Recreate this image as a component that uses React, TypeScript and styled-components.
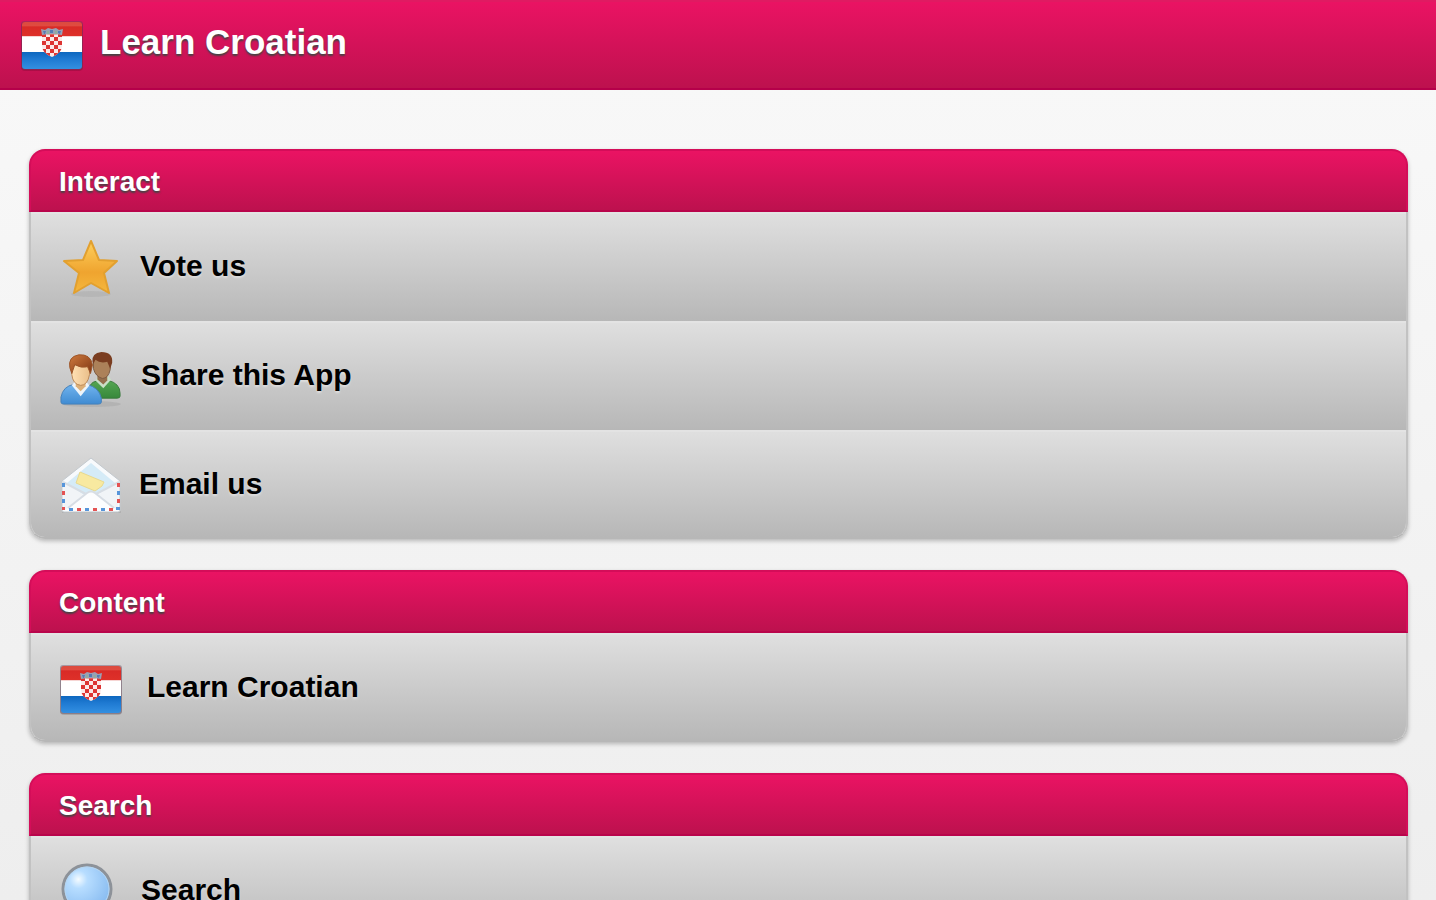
import React from "react";
import styled, { createGlobalStyle } from "styled-components";

const GlobalStyle = createGlobalStyle`
  *, *::before, *::after { box-sizing: border-box; }
  html {
    min-height: 100%;
    background: linear-gradient(#f9f9f9, #eeeeee) fixed;
    scrollbar-width: none;
  }
  body {
    margin: 0;
    font-family: "Liberation Sans", Arial, Helvetica, sans-serif;
  }
`;

const Page = styled.div`
  min-height: 100vh;
`;

const TopBar = styled.header`
  display: flex;
  align-items: center;
  gap: 16px;
  height: 90px;
  padding: 0 20px;
  color: #fff;
  background: linear-gradient(#ea1363, #bd114e);
  border-top: 2px solid #e01a62;
  border-bottom: 2px solid #b5004a;
`;

const Title = styled.h1`
  margin: 0;
  padding-bottom: 6px;
  font-size: 35px;
  line-height: 40px;
  font-weight: 700;
  text-shadow: 0 2px 2px #444;
`;

const Sections = styled.main`
  display: flex;
  flex-direction: column;
  gap: 31px;
  padding: 59px 28px 30px 29px;
`;

const Card = styled.section`
  border-radius: 16px;
  box-shadow: 0 2px 4px rgba(0, 0, 0, 0.25);
`;

const CardTitle = styled.h2`
  margin: 0;
  height: 63px;
  padding: 0 28px;
  font-size: 28px;
  line-height: 62px;
  font-weight: 700;
  color: #fff;
  text-shadow: 0 2px 2px #444;
  background: linear-gradient(#ea1363, #bd114e);
  border: 2px solid #d40d59;
  border-bottom-color: #b9044b;
  border-radius: 16px 16px 0 0;
`;

const List = styled.ul`
  margin: 0;
  padding: 0;
  list-style: none;
  border: solid #c2c2c2;
  border-width: 0 2px 2px;
  border-bottom-color: #b7b7b7;
  border-radius: 0 0 16px 16px;
  overflow: hidden;
`;

const Item = styled.li`
  height: 109px;
  border-top: 2px solid #e3e3e3;
  background: linear-gradient(#dfdfdf, #b7b7b7);

  &:last-child {
    height: 107px;
  }
`;

const ItemLink = styled.a<{ $gap: number }>`
  display: flex;
  align-items: center;
  gap: ${(p) => p.$gap}px;
  height: 107px;
  padding: 0 28px;
  color: #000;
  text-decoration: none;
`;

const Label = styled.span`
  padding-bottom: 4px;
  font-size: 30px;
  line-height: 36px;
  font-weight: 700;
  text-shadow: 0 2px 2px #ddd;
`;

const Icon = styled.svg`
  flex: none;
  width: 64px;
  height: 64px;
`;

const checks: [number, number][] = [];
for (let r = 0; r < 6; r++) {
  for (let c = 0; c < 5; c++) {
    if ((r + c) % 2 === 0) checks.push([c, r]);
  }
}

function FlagIcon({ id }: { id: string }) {
  return (
    <Icon viewBox="0 0 64 64" aria-hidden="true">
      <defs>
        <linearGradient id={id + "r"} x1="0" y1="0" x2="0" y2="1">
          <stop offset="0" stopColor="#d94b3e" />
          <stop offset=".3" stopColor="#e04b40" />
          <stop offset=".4" stopColor="#d92b27" />
          <stop offset="1" stopColor="#de3029" />
        </linearGradient>
        <linearGradient id={id + "b"} x1="0" y1="0" x2="0" y2="1">
          <stop offset="0" stopColor="#0d67bf" />
          <stop offset=".4" stopColor="#1f7ad2" />
          <stop offset="1" stopColor="#3592e3" />
        </linearGradient>
        <clipPath id={id + "f"}><rect x="2" y="9" width="60" height="47" rx="3" /></clipPath>
        <clipPath id={id + "s"}><path d="M22 20q10 3 20 0v13q0 7-10 11q-10-4-10-11Z" /></clipPath>
      </defs>
      <rect x="1" y="9" width="62" height="49" rx="4" fill="#000" opacity=".14" />
      <rect x="1" y="8" width="62" height="49" rx="3" fill="#65405a" opacity=".4" />
      <g clipPath={`url(#${id}f)`}>
        <path d="M2 23h60v18H2Z" fill="#fff" />
        <path d="M2 8h60v15H2Z" fill={`url(#${id}r)`} />
        <path d="M2 39h60v18H2Z" fill={`url(#${id}b)`} />
        <path d="M2 23h60v1H2Z" fill="#f6d5d3" />
      </g>
      <g clipPath={`url(#${id}s)`}>
        <path d="M22 20h20v25H22Z" fill="#fbe9e8" />
        {checks.map(([c, r]) => (
          <rect key={`${c}-${r}`} x={22 + c * 4} y={20 + r * 4} width="4" height="4" fill="#dd3432" />
        ))}
      </g>
      <path d="M21 16l4 1 3-2 4 1 4-1 3 2 4-1-1 6q-10-2-20 0Z" fill="#9aa0b4" />
      <path d="M23 18l3 0-1 3-1 0ZM30 17h3v3h-3ZM38 18l3 0-1 3-2-1Z" fill="#557bb5" />
      <path d="M27 18h2v3h-2ZM35 18h2v3h-2Z" fill="#8fae9c" />
    </Icon>
  );
}

function StarIcon() {
  return (
    <Icon viewBox="0 0 64 64" aria-hidden="true">
      <defs>
        <linearGradient id="star" x1="0" y1="0" x2="0" y2="1">
          <stop offset="0" stopColor="#ffd05c" />
          <stop offset=".6" stopColor="#efa42f" />
          <stop offset="1" stopColor="#f5b83d" />
        </linearGradient>
      </defs>
      <ellipse cx="32" cy="58" rx="20" ry="3" fill="#777" opacity=".14" />
      <path
        d="M32 5L40 24L58 25L45 37L50 57L32 47L15 57L20 37L5 25L24 24Z"
        fill="url(#star)"
        stroke="#e2a02f"
        strokeWidth="2"
        strokeLinejoin="round"
      />
    </Icon>
  );
}

function PeopleIcon() {
  return (
    <Icon viewBox="0 -3 65 65" aria-hidden="true">
      <defs>
        <linearGradient id="shirtBlue" x1="0" y1="0" x2="0" y2="1">
          <stop offset="0" stopColor="#72b4ee" />
          <stop offset="1" stopColor="#3f8bd2" />
        </linearGradient>
        <linearGradient id="shirtGreen" x1="0" y1="0" x2="0" y2="1">
          <stop offset="0" stopColor="#55a653" />
          <stop offset="1" stopColor="#37883b" />
        </linearGradient>
        <linearGradient id="skin" x1="0" y1="0" x2="1" y2="0">
          <stop offset="0" stopColor="#ffe1b4" />
          <stop offset="1" stopColor="#eabf8a" />
        </linearGradient>
        <linearGradient id="hair" x1="0" y1="0" x2="1" y2="1">
          <stop offset="0" stopColor="#d07b3e" />
          <stop offset="1" stopColor="#7d3513" />
        </linearGradient>
      </defs>
      <ellipse cx="33" cy="57" rx="30" ry="3" fill="#666" opacity=".14" />
      <path d="M28 51q0-16 12-18h10q12 3 12 13v3q0 2-3 2Z" fill="url(#shirtGreen)" stroke="#397a3c" />
      <path d="M37 33l8 8 8-9-4-4h-9Z" fill="#c9dfc7" />
      <path d="M39 25h10v8l-4 4-6-5Z" fill="#956e4c" />
      <path d="M35 11q9-6 17 0v11q-2 9-8 9-7-2-9-10Z" fill="#ac8159" stroke="#7d5b42" />
      <path d="M34 14q-1-9 9-10 12 0 11 11l-2 6-3-7q-7 2-12-2l-2 4Z" fill="#7a3d20" />
      <path d="M2 55V50q2-11 13-13h13q13 3 15 14v4q0 2-3 2H5q-3 0-3-2Z" fill="url(#shirtBlue)" stroke="#4581b9" />
      <path d="M13 38l9 11 9-11-5-5h-9Z" fill="#eef4f9" />
      <path d="M17 31h10v8l-5 5-5-5Z" fill="#ddb078" />
      <path d="M13 18q10-6 18 0v9q-2 11-9 11-8-1-9-11Z" fill="url(#skin)" stroke="#bc8958" />
      <path d="M11 20q-2-11 9-13 12-1 14 10l-2 9-3-7q-6 2-13-2l-2 6-1 3Z" fill="url(#hair)" stroke="#9c5428" />
    </Icon>
  );
}

function MailIcon() {
  return (
    <Icon viewBox="0 0 64 64" aria-hidden="true">
      <path d="M3 57h59v2H3Z" fill="#777" opacity=".2" />
      <path d="M3 27L32 4L61 27V56q0 2-2 2H5q-2 0-2-2Z" fill="#f8fafc" stroke="#c3c9ce" />
      <path d="M8 29L32 9L56 29L34 43H27Z" fill="#d5ebf7" />
      <path d="M21 18L45 28L43 32L36 37L17 29Z" fill="#f8e9a0" stroke="#e8d98f" />
      <path d="M4 28L27 42L5 56ZM60 28L37 42L59 56Z" fill="#f1f4f7" />
      <path d="M5 57L28 39q4-3 8 0L59 57Z" fill="#fcfdfe" />
      <path d="M4 28L27 40M60 28L37 40M9 54L28 39q4-3 8 0L55 54" fill="none" stroke="#d7dde4" strokeWidth="2" />
      <path d="M3 29h3v4H3ZM3 45h3v4H3ZM58 37h3v4h-3ZM10 54h4v3h-4ZM26 54h4v3h-4ZM42 54h4v3h-4ZM57 53h4v3h-4Z" fill="#5795da" />
      <path d="M3 37h3v4H3ZM3 53h3v3H3ZM58 29h3v4h-3ZM58 45h3v4h-3ZM18 54h4v3h-4ZM34 54h4v3h-4ZM50 54h4v3h-4Z" fill="#e45353" />
    </Icon>
  );
}

function SearchIcon() {
  return (
    <Icon viewBox="0 0 64 64" aria-hidden="true">
      <defs>
        <radialGradient id="lens" cx=".32" cy=".3" r=".75">
          <stop offset="0" stopColor="#f4fbff" />
          <stop offset=".25" stopColor="#b7ddff" />
          <stop offset="1" stopColor="#86baf0" />
        </radialGradient>
      </defs>
      <path d="M44 44l14 14" stroke="#777" strokeWidth="9" strokeLinecap="round" />
      <circle cx="28" cy="29" r="24" fill="url(#lens)" stroke="#8d9299" strokeWidth="3" />
      <circle cx="28" cy="29" r="22" fill="none" stroke="#b7d5ef" />
    </Icon>
  );
}

const sections = [
  {
    title: "Interact",
    items: [
      { label: "Vote us", icon: <StarIcon />, gap: 17 },
      { label: "Share this App", icon: <PeopleIcon />, gap: 18 },
      { label: "Email us", icon: <MailIcon />, gap: 16 },
    ],
  },
  { title: "Content", items: [{ label: "Learn Croatian", icon: <FlagIcon id="row" />, gap: 24 }] },
  { title: "Search", items: [{ label: "Search", icon: <SearchIcon />, gap: 18 }] },
];

export default function App() {
  return (
    <Page>
      <GlobalStyle />
      <TopBar>
        <FlagIcon id="top" />
        <Title>Learn Croatian</Title>
      </TopBar>
      <Sections>
        {sections.map((section) => (
          <Card key={section.title}>
            <CardTitle>{section.title}</CardTitle>
            <List>
              {section.items.map((item) => (
                <Item key={item.label}>
                  <ItemLink href="#" $gap={item.gap}>
                    {item.icon}
                    <Label>{item.label}</Label>
                  </ItemLink>
                </Item>
              ))}
            </List>
          </Card>
        ))}
      </Sections>
    </Page>
  );
}
